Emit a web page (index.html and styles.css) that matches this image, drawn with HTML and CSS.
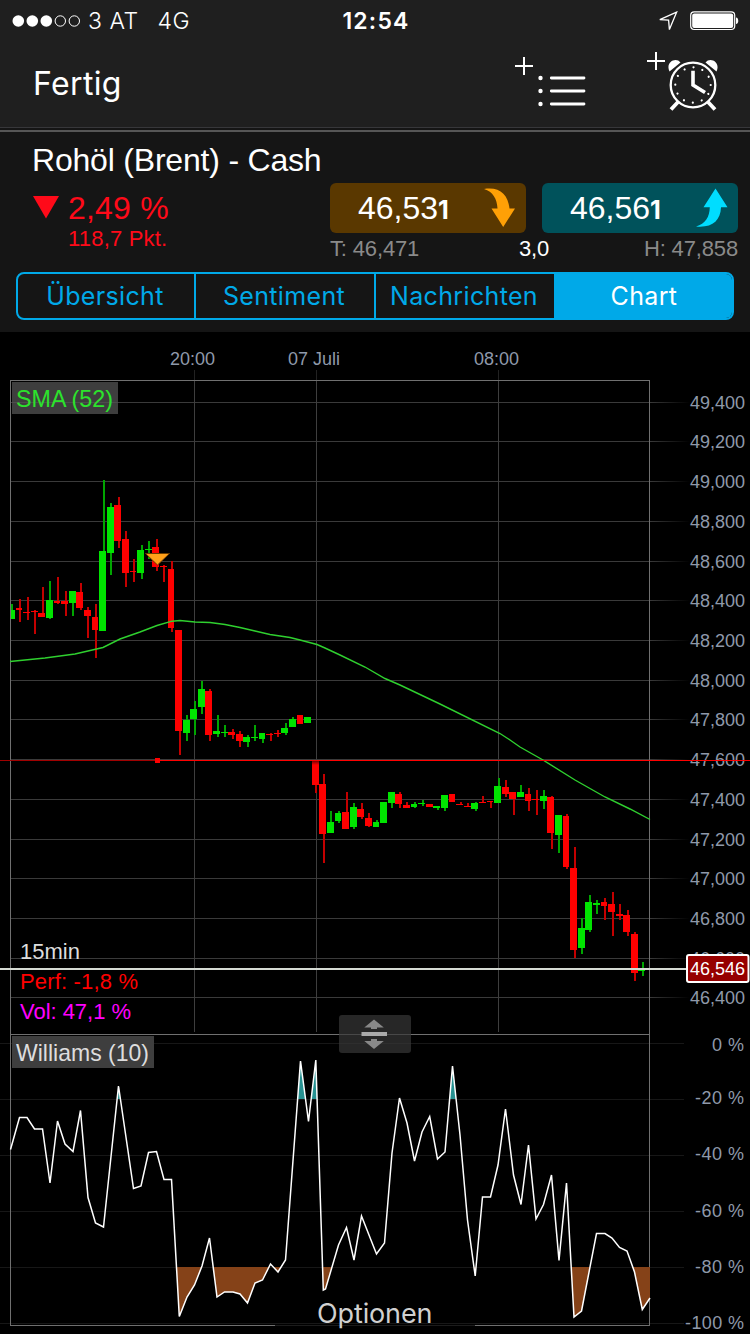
FILE: index.html
```html
<!DOCTYPE html>
<html lang="de">
<head>
<meta charset="utf-8">
<title>Rohöl (Brent) - Cash</title>
<link rel="stylesheet" href="styles.css">
</head>
<body>
<header class="top">
  <div class="status">
    <div class="carrier">
      <svg class="signal" width="70" height="14" viewBox="0 0 70 14"><g fill="#fff"><circle cx="6.3" cy="7" r="5.8"/><circle cx="20.3" cy="7" r="5.8"/><circle cx="34.3" cy="7" r="5.8"/></g><g fill="none" stroke="#fff"><circle cx="48.3" cy="7" r="5.2"/><circle cx="62.3" cy="7" r="5.2"/></g></svg>
      <span class="net">3 AT</span><span class="net">4G</span>
    </div>
    <time class="clock">12:54</time>
    <div class="indicators">
      <svg width="20" height="20" viewBox="0 0 20 20" fill="none" stroke="#fff" stroke-width="1.3"><path d="M18.6 1.2 1.8 8.6 10.6 9.2 11.4 18.6Z"/></svg>
      <svg width="50" height="20" viewBox="0 0 50 20"><rect x=".7" y=".9" width="44" height="17.6" rx="3.5" fill="none" stroke="#fff" stroke-width="1.2"/><rect x="2.2" y="2.4" width="41" height="14.6" rx="2" fill="#fff"/><path d="M46 6.5c3 .3 3 6.300 0 6.600z" fill="#fff"/></svg>
    </div>
  </div>
  <nav class="nav">
    <a class="done">Fertig</a>
    <div class="actions">
      <svg width="72" height="56" viewBox="514 52 72 56" stroke="#fff" fill="none"><path d="M515 66h18M524 57v18" stroke-width="2"/><path d="M551.300 78H584M551.300 91H584M551.300 104H584" stroke-width="2.800" stroke-linecap="round"/><g fill="#fff" stroke="none"><circle cx="540.500" cy="78" r="2.200"/><circle cx="540.500" cy="91" r="2.200"/><circle cx="540.500" cy="104" r="2.200"/></g></svg>
      <svg width="74" height="64" viewBox="646 50 74 64" stroke="#fff" fill="none"><path d="M647 61h18M656 52v18" stroke-width="2"/><circle cx="693" cy="85" r="22.300" stroke-width="2.300"/><path d="M669.500 71.500C665 62 676 56.500 680.500 62.500ZM716.500 71.500C721 62 710 56.500 705.500 62.500Z" fill="#fff" stroke="none"/><path d="m678 102-7 7.500M708 102l7 7.500" stroke-width="3.800"/><path d="M693 72.500V85l10.500 6.500" stroke-width="3.600" stroke-linecap="square"/><circle cx="693" cy="85" r="17.700" stroke-width="2.200" stroke-linecap="round" stroke-dasharray=".01 9.257"/></svg>
    </div>
  </nav>
</header>
<section class="quote">
  <h1 class="title">Rohöl (Brent) - Cash</h1>
  <div class="figures">
    <div class="change">
      <svg width="26" height="23" viewBox="0 0 26 23"><path d="M0 0h26L13 22.500z" fill="#ff0a19"/></svg>
      <div><div class="percent">2,49 %</div><div class="points">118,7 Pkt.</div></div>
    </div>
    <div class="deal">
      <div class="buttons">
        <div class="price sell"><span class="value">46,53<b>1</b></span>
          <svg width="32" height="40" viewBox="0 0 32 40"><path d="M0 1C15-1.500 24 6 25.500 20.500H31L19.200 39 7.500 20.500H13.500C13 11 9 3.500 0 1Z" fill="#ffa006"/></svg></div>
        <div class="price buy"><span class="value">46,56<b>1</b></span>
          <svg width="32" height="40" viewBox="0 0 32 40"><path d="M0 38.500C16 40 24.500 33 25 19.300H31.500L19.500.500 7.500 19.300H13.800C13.500 29 9.500 36 0 38.500Z" fill="#00ddff"/></svg></div>
      </div>
      <div class="range"><span>T: 46,471</span><span class="spread">3,0</span><span class="high">H: 47,858</span></div>
    </div>
  </div>
  <div class="tabs"><div class="tab">Übersicht</div><div class="tab">Sentiment</div><div class="tab">Nachrichten</div><div class="tab active">Chart</div></div>
</section>
<main class="chart">
<svg class="plot" width="750" height="1002" viewBox="0 332 750 1002">
  <defs>
    <linearGradient id="fade" gradientUnits="userSpaceOnUse" x1="650" x2="690" y1="0" y2="0"><stop stop-color="#3a3a3a"/><stop offset="1" stop-color="#000"/></linearGradient>
    <linearGradient id="gap" x1="0" x2="0" y1="0" y2="1"><stop stop-color="#700"/><stop offset="1" stop-color="#f00"/></linearGradient>
    <clipPath id="over"><rect x="11" y="1036" width="639" height="63"/></clipPath>
    <clipPath id="under"><rect x="11" y="1267" width="639" height="58"/></clipPath>
  </defs>
  <g id="labels" class="axis"></g>
  <g id="grid" shape-rendering="crispEdges"></g>
  <g shape-rendering="crispEdges" fill="none" stroke="#707070">
    <path d="M10.500 1325.500V380.500H649.500V1325.500M10 1034.500H650M10 1325.500H275M475 1325.500H650"/>
    <path d="M275 1325.500H475" stroke="#1c1c1c"/>
  </g>
  <g class="axis" text-anchor="middle"><text x="192.500" y="365" textLength="45">20:00</text><text x="314" y="365" textLength="52">07 Juli</text><text x="496.500" y="365" textLength="45">08:00</text></g>
  <g id="candles" shape-rendering="crispEdges"></g>
  <rect x="312" y="761" width="7" height="4" fill="url(#gap)"/>
  <path class="sma" d="M10 661.500 45 658 75 654 103 647.500 120 639 140 632 157 625.500 172 621.200 180 620.500 195 622 210 622.500 225 624.500 240 627.500 255 631 270 634.500 290 637.500 300 640 317 644.500 325 648 340 655 365 667 385 678.500 400 685 440 704 500 733.500 510 740 520 747 543 760 575 780 605 797 630 809 650 819.500"/>
  <path d="M145.500 553.500H169.500L157.500 565Z" fill="#ffa019" stroke="#6b3c00"/>
  <g shape-rendering="crispEdges"><path d="M0 760.500H157" stroke="#a00000"/><path d="M157 760.500H750" stroke="#f00"/><rect x="155" y="758" width="5" height="5" fill="#f00"/>
  <path d="M0 969H687" stroke="#d5dad3" stroke-width="2"/></g>
  <rect x="687" y="955" width="61.500" height="27" rx="2" fill="#960000" stroke="#fff" stroke-width="2"/>
  <text class="last" x="690" y="975" textLength="55">46,546</text>
  <rect x="12" y="382" width="106" height="32" fill="#3e3e3e"/><path d="M12 402.500H118" stroke="#4d4d4d"/>
  <text class="badge green" x="16" y="407" textLength="97" lengthAdjust="spacingAndGlyphs">SMA (52)</text>
  <g class="info"><text x="20" y="959" textLength="60" fill="#ddd">15min</text><text x="20" y="989" textLength="118" fill="#f00">Perf: -1,8 %</text><text x="20" y="1019" textLength="111" fill="#f0f">Vol: 47,1 %</text></g>
  <rect x="12" y="1036" width="142" height="32" fill="#3e3e3e"/>
  <text class="badge" x="16" y="1061" textLength="133" lengthAdjust="spacingAndGlyphs">Williams (10)</text>
  <path id="peaks" fill="#279292" clip-path="url(#over)"/>
  <path id="troughs" fill="#854218" clip-path="url(#under)"/>
  <path id="williams" class="osc"/>
  <rect x="339" y="1015" width="72" height="38" rx="3" fill="#272727"/>
  <path d="M339 1034.500H411" stroke="#484848"/><path d="M339 1043.500H411" stroke="#2e2e2e"/>
  <path d="M374 1019.500 383.800 1027.500H377V1029H371V1027.500H364.300ZM374 1049 364.300 1041H371V1039H377V1041H383.800Z" fill="#888"/><path d="M361.500 1034H387" stroke="#aaa" stroke-width="4"/>
  <text class="options" x="317" y="1323" textLength="115.500">Optionen</text>
</svg>
</main>
<script src="chart.js"></script>
</body>
</html>
```
FILE: styles.css
```css
* { box-sizing: border-box; }
body { margin: 0; width: 750px; background: #000; color: #fff; font-family: "Liberation Sans", Arial, sans-serif; overflow: hidden; }
svg { display: block; flex: none; }
.top { height: 132px; background: #1f1f1f; border-bottom: 2px solid #565656; font-family: Inter, "Noto Sans", sans-serif; display: flex; flex-direction: column; box-shadow: inset 0 -2px #151515, inset 0 -3px #37373a; }
.status { height: 41px; padding: 0 10px 0 12px; display: grid; grid-template-columns: 1fr auto 1fr; align-items: center; font-size: 23px; }
.carrier { display: flex; align-items: center; }
.net { margin-left: 6px; font-weight: 300; letter-spacing: .5px; }
.net + .net { margin-left: 19px; }
.clock { font-weight: 600; letter-spacing: 1.2px; }
.indicators { display: flex; justify-content: flex-end; gap: 12px; }
.nav { flex: 1; padding: 0 30px 0 33px; display: flex; justify-content: space-between; align-items: flex-start; }
.done { font-size: 32px; line-height: 40px; font-weight: 400; letter-spacing: .35px; margin-top: 23px; }
.actions { display: flex; gap: 60px; align-items: flex-start; }
.actions svg:first-child { margin-top: 11px; }
.actions svg:last-child { margin-top: 9px; }
.quote { height: 200px; background: #151515; padding: 9px 12px 12px 16px; display: flex; flex-direction: column; }
.title { margin: 0 0 0 16px; font-size: 32px; line-height: 38px; font-weight: 400; letter-spacing: -.2px; }
.figures { display: flex; justify-content: space-between; margin: 4px 0 0 17px; height: 89px; }
.change { display: flex; gap: 9px; padding-top: 13px; color: #ff0a19; }
.change > div { margin-top: -5px; }
.percent { font-size: 32px; line-height: 34px; letter-spacing: .2px; }
.points { font-size: 22px; line-height: 28px; letter-spacing: .2px; }
.deal { width: 408px; }
.buttons { display: flex; gap: 16px; }
.price { width: 196px; height: 50px; border-radius: 6px; padding: 0 10px 0 28px; display: flex; align-items: center; justify-content: space-between; font-size: 32px; }
.sell { background: #5a3800; }
.buy { background: #00525b; }
.value b { font-family: Inter, sans-serif; font-size: 25px; line-height: 1; }
.range { display: grid; grid-template-columns: 1fr auto 1fr; font-size: 22px; line-height: 32px; letter-spacing: -.15px; color: #8a8a8a; }
.spread { color: #fff; }
.high { text-align: right; }
.tabs { width: 718px; height: 48px; display: grid; grid-template-columns: 178px 180px 180px 1fr; border: 2px solid #00a9e8; border-radius: 8px; font-family: Inter, "Noto Sans", sans-serif; font-size: 25px; letter-spacing: .35px; color: #00a9e8; overflow: hidden; }
.tab { display: flex; align-items: center; justify-content: center; padding-right: 2px; border-right: 2px solid #00a9e8; }
.tab.active { background: #00a9e8; color: #fff; border: 0; padding: 0; }
.chart { height: 1002px; }
.plot { font-family: "Liberation Sans", Arial, sans-serif; }
.axis { font-size: 18px; fill: #8f99aa; }
.last { font-size: 18px; fill: #fff; }
.badge { font-size: 24px; fill: #ddd; }
.green { fill: #2ce32c; }
.info { font-size: 22px; }
.sma { fill: none; stroke: #2fd02f; stroke-width: 1.400; }
.osc { fill: none; stroke: #fff; stroke-width: 1.500; }
.options { font-family: Inter, "Noto Sans", sans-serif; font-size: 27px; fill: #d0d0d0; }
```
FILE: chart.js
```js
const NS = 'http://www.w3.org/2000/svg';
function add(parent, tag, attrs, text) {
  const el = document.createElementNS(NS, tag);
  for (const key in attrs) el.setAttribute(key, attrs[key]);
  if (text) el.textContent = text;
  document.getElementById(parent).appendChild(el);
}
const rect = (parent, x, y, width, height, fill) => add(parent, 'rect', { x, y, width, height, fill });

// Price scale
[402, 441, 481, 521, 561, 600, 640, 680, 719, 759, 799, 839, 878, 918, 958, 997].forEach((y, i) => {
  rect('grid', 10, y, 640, 1, '#3a3a3a');
  rect('grid', 650, y, 40, 1, 'url(#fade)');
  const v = 49400 - i * 200;
  add('labels', 'text', { x: 690, y: y + 7, textLength: 55 }, Math.floor(v / 1000) + ',' + String(v % 1000).padStart(3, '0'));
});
[194, 316, 498].forEach(x => {
  rect('grid', x, 370, 1, 10, '#222');
  rect('grid', x, 380, 1, 652, '#3e3e3e');
});

// Williams scale
[1043, 1099, 1155, 1211, 1267, 1323].forEach((y, i) => {
  rect('grid', 0, y, 684, 1, '#171717');
  add('labels', 'text', { x: 744, y: [1051, 1104, 1160, 1217, 1273, 1329][i], 'text-anchor': 'end', textLength: i === 0 ? 32 : i === 5 ? 59 : 49 }, (i ? '-' + i * 20 : '0') + ' %');
});

// direction, body left, body right, body top, body bottom, wick left, wick top, wick bottom
const candles = `g 11 15 610 619 11 604 619
r 16 22 608 610 19 599 622
r 23 30 612 613 27 597 620
r 31 38 611 612 34 610 634
r 38 45 613 617 42 587 617
g 46 53 600 618 49 581 619
r 54 60 601 603 57 577 604
r 61 68 601 604 65 591 616
g 69 76 591 603 72 591 616
r 76 83 592 608 80 583 610
r 84 91 610 616 87 607 638
r 92 98 617 630 95 604 658
g 99 106 551 631 103 480 631
g 107 114 507 553 110 503 575
r 114 121 505 541 118 497 548
r 122 129 539 573 125 531 587
r 130 136 571 572 133 559 582
g 137 144 550 573 141 545 579
g 145 152 549 550 148 541 559
r 152 159 547 567 156 539 571
r 160 167 566 567 163 565 582
r 168 174 569 628 171 561 632
r 175 182 630 731 179 630 755
g 183 190 720 733 186 715 741
g 190 197 709 719 194 701 735
g 198 205 689 707 201 681 714
r 205 212 691 735 209 689 741
g 213 220 731 734 217 715 737
g 221 228 732 733 224 725 737
r 228 235 732 735 232 729 739
r 236 243 734 741 239 731 747
g 243 250 737 742 247 735 747
g 251 258 737 738 254 725 741
g 259 265 733 739 262 733 743
r 266 273 734 735 270 733 741
r 274 281 733 734 277 730 737
g 281 288 728 733 285 723 735
g 289 296 719 727 292 717 727
r 297 303 715 724 299 715 724
g 304 311 717 723 307 717 723
r 312 319 761 785 315 761 793
r 319 326 784 834 323 774 863
g 327 334 822 833 330 811 833
g 335 341 813 821 338 811 823
r 342 349 812 829 346 792 829
g 350 357 807 827 353 803 829
r 357 364 809 817 361 803 819
r 365 372 818 826 368 813 827
g 373 379 822 827 376 820 827
g 380 387 802 823 383 802 823
g 388 395 792 803 391 792 808
r 395 402 794 804 399 792 808
r 403 410 805 808 406 802 808
g 411 417 804 807 414 802 808
g 418 425 803 804 422 800 806
r 426 433 804 807 429 804 807
g 433 440 806 808 437 806 810
g 441 448 795 808 444 795 811
r 449 455 794 802 452 794 802
r 456 463 804 805 460 802 805
r 464 471 806 807 467 803 807
g 471 478 803 809 475 802 811
r 479 486 802 803 482 796 803
r 487 493 801 802 490 801 808
g 494 501 786 803 498 778 803
r 502 509 787 794 505 780 797
r 509 516 792 799 513 792 815
g 517 524 792 797 520 785 797
r 525 531 794 801 528 788 811
r 532 539 799 800 536 790 815
g 540 547 796 801 543 790 809
r 547 554 797 833 551 796 849
g 555 562 815 835 558 815 853
r 563 569 816 867 566 814 869
r 570 577 868 950 574 847 958
g 578 585 928 948 581 918 954
g 585 592 902 930 589 895 932
g 593 600 903 905 596 900 914
r 601 607 902 906 604 898 920
r 608 615 904 912 612 892 936
r 616 623 914 916 619 904 920
r 623 630 915 932 627 910 936
r 631 638 934 973 634 932 981
g 638 645 969 971 642 962 976`;
candles.split('\n').forEach(line => {
  const [dir, ...n] = line.split(' ');
  const [left, right, top, bottom, wick, high, low] = n.map(Number);
  const up = dir === 'g';
  rect('candles', wick, high, 2, low - high, up ? '#00a500' : '#c40000');
  rect('candles', left, top, right - left, bottom - top, up ? '#00e400' : '#f00');
});

const osc = '10.5 1149.5 19.5 1117.5 27 1117.5 34.5 1129 42.5 1129 50 1183 57.5 1121 65 1144 73 1151.5 80.5 1110.5 88 1197.5 95.5 1223 103.5 1227 118.5 1086 133.5 1188.5 141 1186 148.5 1152.5 156.5 1151.5 164 1179.5 171.5 1179.5 179.3 1316.5 187 1297 194.5 1285 202 1266 209.5 1238 217 1297 224.5 1292 233 1292 240 1294 247.5 1303 255 1283 262.5 1280 270.5 1264 278 1272 285.5 1260 300.5 1061 308.5 1121.5 315.8 1060 323.3 1290 325.5 1289 338.5 1245 346.5 1227.5 354 1260 361.5 1216 376.5 1254 384.5 1243 392 1153 399.5 1098 407 1123 414.5 1161 422 1132 429.7 1116.5 437.5 1159 445 1152 452.5 1066 460 1135 467.5 1220 475.2 1276 482.5 1197 490.5 1197 498 1165 505.5 1109 513.5 1175 521 1204.5 528.5 1145 536 1219 543.5 1204.5 551.5 1175 559 1260.5 566.5 1183 574 1317 581.5 1311 596.5 1233.5 605 1233.5 612 1238 619.5 1247.5 627 1251 634.5 1272 642.3 1309.5 650 1298';
const setPath = (id, d) => document.getElementById(id).setAttribute('d', d);
setPath('williams', 'M' + osc);
setPath('peaks', 'M10 1099 ' + osc + ' 650 1099Z');
setPath('troughs', 'M10 1267 ' + osc + ' 650 1267Z');
```
